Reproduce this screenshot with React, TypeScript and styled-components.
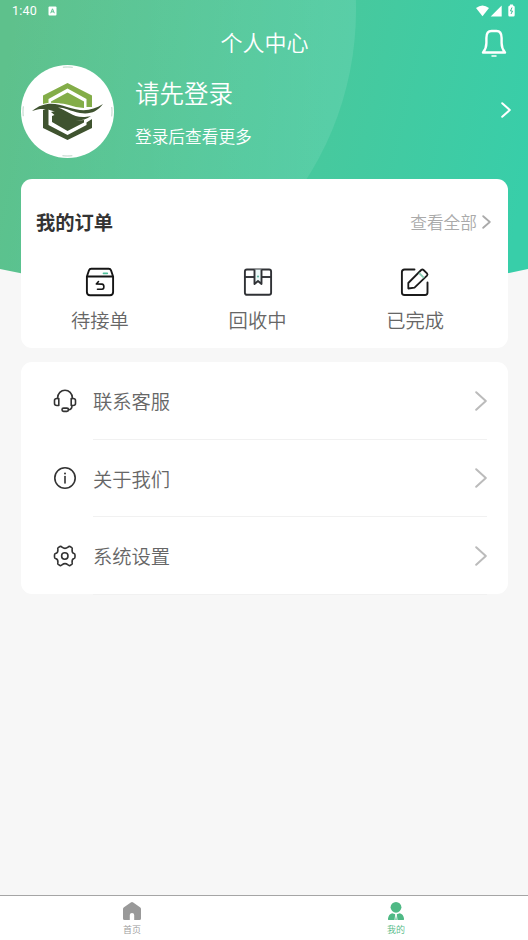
import React from 'react';
import styled, { createGlobalStyle } from 'styled-components';

const Global = createGlobalStyle`
  * { box-sizing: border-box; }
  body {
    margin: 0;
    background: #f7f7f7;
    font-family: Roboto, 'Noto Sans CJK SC', sans-serif;
    font-weight: 350;
  }
`;

const Screen = styled.div`
  position: relative;
  display: flex;
  flex-direction: column;
  width: 528px;
  height: 940px;
  overflow: hidden;
  background: #f7f7f7;
`;

const Backdrop = styled.svg`
  position: absolute;
  top: 0;
  left: 0;
`;

const Header = styled.header`
  position: relative;
  height: 179px;
  color: #fff;
`;

const StatusBar = styled.div`
  display: flex;
  align-items: center;
  height: 22px;
  padding: 0 12px;
  font-size: 12.5px;
  font-weight: 400;
  line-height: 22px;
  letter-spacing: 0.2px;

  svg { display: block; }
`;

const StatusTime = styled.span`
  width: 36px;
`;

const StatusIcons = styled.div`
  display: flex;
  align-items: center;
  margin-left: auto;
  margin-top: -1px;
`;

const TitleBar = styled.div`
  display: grid;
  grid-template-columns: 60px 1fr 60px;
  align-items: center;
  height: 43px;

  svg { justify-self: center; margin: 0 9px 2px 0; }
`;

const Title = styled.h1`
  grid-column: 2;
  margin: 1px 0 0 1px;
  font-size: 22px;
  line-height: 32px;
  font-weight: 350;
  text-align: center;
`;

const Profile = styled.div`
  display: flex;
  align-items: center;
  height: 93px;
  padding: 0 17px 0 21px;

  > svg { margin-bottom: 3px; }
`;

const Avatar = styled.div`
  width: 93px;
  height: 93px;
  border-radius: 50%;
  background: #fff;
  overflow: hidden;
`;

const ProfileText = styled.div`
  flex: 1;
  margin-left: 21px;
`;

const LoginTitle = styled.div`
  margin-top: 5px;
  font-size: 24.5px;
  line-height: 36px;
`;

const LoginHint = styled.div`
  margin-top: 12px;
  font-size: 16.7px;
  line-height: 26px;
`;

const Card = styled.section<{ $height: number }>`
  position: relative;
  flex: none;
  height: ${(p) => p.$height}px;
  margin: 0 20px 14px 21px;
  border-radius: 11px;
  background: #fff;
`;

const CardHead = styled.div`
  display: flex;
  align-items: center;
  justify-content: space-between;
  height: 84px;
  padding: 5px 17px 0 15px;
`;

const CardTitle = styled.h2`
  margin: 0;
  font-size: 19.3px;
  line-height: 28px;
  font-weight: 700;
  color: #333;
`;

const ViewAll = styled.div`
  display: flex;
  align-items: center;
  gap: 5px;
  font-size: 16.7px;
  line-height: 26px;
  color: #aaa;

  svg { margin-bottom: 3px; }
`;

const Orders = styled.div`
  display: grid;
  grid-template-columns: repeat(3, 157.7px);
`;

const Order = styled.div`
  display: flex;
  flex-direction: column;
  align-items: center;
  padding-top: 4px;
  font-size: 19.3px;
  line-height: 28px;
  color: #666;

  svg { display: block; margin-bottom: 11px; }
`;

const MenuRow = styled.div`
  display: flex;
  align-items: center;
  height: 77.5px;
  padding: 0 21px 0 32px;
`;

const MenuBody = styled.div`
  display: flex;
  align-items: center;
  justify-content: space-between;
  flex: 1;
  height: 77.5px;
  margin-left: 16px;
  border-bottom: 1px solid #f1f1f1;
  font-size: 19.3px;
  line-height: 28px;
  color: #666;

  svg { margin-top: 1px; }
`;

const MenuLabel = styled.span`
  padding-top: 6px;
`;

const TabBar = styled.nav`
  display: grid;
  grid-template-columns: 1fr 1fr;
  height: 45px;
  margin-top: auto;
  border-top: 1px solid #a5a5a5;
  background: #fff;
`;

const Tab = styled.div<{ $active?: boolean }>`
  display: flex;
  flex-direction: column;
  align-items: center;
  padding-top: 5px;
  font-size: 9px;
  line-height: 13px;
  color: ${(p) => (p.$active ? '#4fb985' : '#999')};

  svg { display: block; margin-bottom: 3px; }
`;

const Chevron = ({ w, h, color, stroke }: { w: number; h: number; color: string; stroke: number }) => (
  <svg width={w} height={h} fill="none" stroke={color} strokeWidth={stroke} strokeLinecap="round" strokeLinejoin="round">
    <path d={`M1.2 1.2L${w - 1.2} ${h / 2}L1.2 ${h - 1.2}`} />
  </svg>
);

const HeaderBackdrop = () => (
  <Backdrop width="528" height="290" viewBox="0 0 528 290">
    <defs>
      <linearGradient id="green" gradientUnits="userSpaceOnUse" x1="0" y1="90" x2="520" y2="210">
        <stop offset="0" stopColor="#5ec18c" />
        <stop offset="1" stopColor="#38cea9" />
      </linearGradient>
      <linearGradient id="glow" gradientUnits="userSpaceOnUse" x1="0" y1="0" x2="356" y2="0">
        <stop offset="0" stopColor="#fff" stopOpacity="0" />
        <stop offset="1" stopColor="#fff" stopOpacity="0.1" />
      </linearGradient>
      <clipPath id="hero"><path d="M0 0H528V269Q264 326 0 269Z" /></clipPath>
    </defs>
    <g clipPath="url(#hero)">
      <rect width="528" height="290" fill="url(#green)" />
      <circle cx="42" cy="10" r="314" fill="url(#glow)" />
    </g>
  </Backdrop>
);

const Logo = () => (
  <svg width="93" height="93" viewBox="0 0 93 93">
    <circle cx="46.5" cy="46.5" r="44.5" fill="none" stroke="#8fb9a3" strokeWidth=".6" strokeDasharray="10 59.9" strokeDashoffset="5" />
    <path d="M22 40V30.5L46.500 18L71 30.500V42H65.500V34L46.500 23.500L27.500 34V39Z" fill="#83ad48" />
    <path d="M30 39V36.500L46.500 27.500L63 36.500V43Q56 43 48 40Q39 37 30 39Z" fill="#83ad48" />
    <path d="M22 45L27.500 43V60L46.500 70L65.500 60V57.500L71 54V63L46.500 75L22 63Z" fill="#3f532f" />
    <path d="M30 47L35 46C42 49 48 57 63 55V57.500L46.500 66L31 57V51L33.500 50Z" fill="#3f532f" />
    <path d="M11 46C23 36 35 38 46 42C61 47 71 46 82 39C76 47 69 49 59 47.500C49 46 42 42 33 43" fill="none" stroke="#fff" strokeWidth="2" />
    <path d="M11 46C23 36 35 38 46 42C61 47 71 46 82 39C76 47 69 49.500 59 48C49 46 44 42.500 37 42.500C48 46 53 55 70 51C62 57 50 57 42 51.500C32 44 22 42 11 46Z" fill="#3f532f" />
  </svg>
);

const BellIcon = () => (
  <svg width="26" height="28" viewBox="0 0 26 28" fill="none" stroke="#fff" strokeWidth="2.4" strokeLinecap="round" strokeLinejoin="round">
    <path d="M2 23.500C4.500 20.500 5.400 18 5.400 14V9C5.400 4 7.500 2 10.500 2H15.500C18.500 2 20.600 4 20.600 9V14C20.600 18 21.500 20.500 24 23.500Z" />
    <path d="M11 26.900H15" strokeWidth="1.500" />
  </svg>
);

const ReturnBoxIcon = () => (
  <svg width="30" height="30" viewBox="0 0 30 30" fill="none" stroke="#151515" strokeWidth="1.900" strokeLinecap="round" strokeLinejoin="round">
    <path d="M1.900 9.500L4 3.300Q4.600 1.700 6.200 1.700H23.800Q25.400 1.700 26 3.300L28.100 9.500V25Q28.100 28.200 25 28.200H5Q1.900 28.200 1.900 25ZM1.900 9.500H28.100" />
    <path d="M13.500 14.500L11.300 17L17 17.100C19.500 17.300 19.500 22 17 22.200H12.500" strokeWidth="1.600" />
    <path d="M18.500 6.300H22.300" stroke="#4fc09a" strokeWidth="1.700" />
  </svg>
);

const BookmarkBoxIcon = () => (
  <svg width="30" height="30" viewBox="0 0 30 30" fill="none" stroke="#303236" strokeWidth="1.900" strokeLinejoin="round">
    <rect x="1.900" y="2.500" width="26.200" height="25.300" rx="2" />
    <path d="M1.900 10H28.100" />
    <path d="M11.500 2.500V17L15 14L18.500 17V2.500Z" fill="#eefafa" stroke="none" />
    <path d="M11.500 2.500V17L15 14L18.500 17V2.500" />
    <circle cx="15" cy="9.500" r="1.100" fill="#62b8a5" stroke="none" />
  </svg>
);

const EditIcon = () => (
  <svg width="30" height="30" viewBox="0 0 30 30" fill="none" stroke="#1b1b1b" strokeWidth="1.900" strokeLinecap="round" strokeLinejoin="round">
    <path d="M14.500 2.500H4.500Q1.900 2.500 1.900 5V25.500Q1.900 28 4.500 28H25Q27.500 28 27.500 25.500V15.500" />
    <path d="M21.200 3Q22.400 1.900 23.500 3L27 6.400Q28 7.500 27 8.600L14.500 20.700L8.300 21.500V16Z" strokeWidth="1.800" />
    <path d="M19.600 6.500L23.500 10.300" stroke="#8bcdb4" strokeWidth="1.800" />
  </svg>
);

const HeadsetIcon = () => (
  <svg width="24" height="24" viewBox="0 0 24 24" fill="none" stroke="#333" strokeWidth="1.600" strokeLinecap="round" strokeLinejoin="round">
    <path d="M4.500 9.500C4.500 -1.500 19.500 -1.500 19.500 9.500" />
    <path d="M5.800 9.500V16.500H4Q1.500 16.500 1.500 14.500V11.500Q1.500 9.500 4 9.500ZM18.200 9.500V16.500H20Q22.500 16.500 22.500 14.500V11.500Q22.500 9.500 20 9.500Z" />
    <path d="M19 16.500Q19 20.700 15.500 20.700" />
    <rect x="9" y="19.100" width="6.500" height="3.300" rx="1.600" />
  </svg>
);

const InfoIcon = () => (
  <svg width="24" height="24" viewBox="0 0 24 24" fill="none" stroke="#333" strokeWidth="1.600" strokeLinecap="round">
    <circle cx="12" cy="12" r="10.200" />
    <path d="M12 10.500V17" />
    <circle cx="12" cy="7.500" r="1" fill="#333" stroke="none" />
  </svg>
);

const GearIcon = () => (
  <svg width="24" height="24" viewBox="0 0 24 24" fill="none" stroke="#333" strokeWidth="1.600" strokeLinejoin="round">
    <path d="M7 2.500Q8 2 9 3.200Q12 5.600 15 3.200Q16 2 17 2.500L18.800 3.600Q19.600 4.200 19.100 5.500Q18.800 8.900 21 9.500Q22 9.800 22 11V13Q22 14.200 21 14.500Q18.800 15.100 19.100 18.500Q19.600 19.800 18.800 20.400L17 21.500Q16 22 15 20.800Q12 18.400 9 20.800Q8 22 7 21.500L5.200 20.400Q4.400 19.800 4.900 18.500Q5.200 15.100 2.500 14.500Q1.500 14.200 1.500 13V11Q1.500 9.800 2.500 9.500Q5.200 8.900 4.900 5.500Q4.400 4.200 5.200 3.600Z" />
    <circle cx="11.800" cy="12" r="3.200" />
  </svg>
);

const HomeIcon = () => (
  <svg width="20" height="20" viewBox="0 0 20 20" fill="#999">
    <path d="M8.800 1.500Q10 .6 11.200 1.500L18 6.200Q19 7 19 8V17.500Q19 19 17.500 19H12.200V14Q12.200 12 10 12Q7.800 12 7.800 14V19H2.500Q1 19 1 17.500V8Q1 7 2 6.200Z" />
  </svg>
);

const UserIcon = () => (
  <svg width="18" height="20" viewBox="0 0 18 20" fill="#4fb985">
    <circle cx="9" cy="6.300" r="5.400" />
    <path d="M5.200 12.200L8.200 13.200L7.500 19H1.500Q.8 19 1 17.500Q1.500 13.300 5.200 12.200ZM12.800 12.200L9.800 13.200L10.500 19H16.500Q17.200 19 17 17.500Q16.500 13.300 12.800 12.200Z" />
    <path d="M9 14L9.700 19H8.300Z" />
  </svg>
);

const orders = [
  { label: '待接单', Icon: ReturnBoxIcon },
  { label: '回收中', Icon: BookmarkBoxIcon },
  { label: '已完成', Icon: EditIcon },
];

const menu = [
  { label: '联系客服', Icon: HeadsetIcon },
  { label: '关于我们', Icon: InfoIcon },
  { label: '系统设置', Icon: GearIcon },
];

export default function App() {
  return (
    <Screen>
      <Global />
      <HeaderBackdrop />
      <Header>
        <StatusBar>
          <StatusTime>1:40</StatusTime>
          <svg width="9" height="10" viewBox="0 0 9 10">
            <rect x=".5" y=".5" width="8" height="9" rx="1" fill="#fff" />
            <path d="M2.700 7.200L4.500 2.800L6.300 7.200M3.400 5.800H5.600" fill="none" stroke="#5fc293" />
          </svg>
          <StatusIcons>
            <svg width="40" height="14" viewBox="0 0 40 14" fill="#fff">
              <path d="M0 4Q6.500 -1 13 4L6.500 12.200Z" />
              <path d="M25.700 1.500V12.500H14.700Z" />
              <path d="M34 1.500V.6H37V1.500Q38.700 1.500 38.700 3V11Q38.700 12.500 37.500 12.500H33.500Q32.300 12.500 32.300 11V3Q32.300 1.500 34 1.500Z" />
              <path d="M36 3.500L34.500 7H36.500L35 10" fill="none" stroke="#3bbd98" />
            </svg>
          </StatusIcons>
        </StatusBar>
        <TitleBar>
          <Title>个人中心</Title>
          <BellIcon />
        </TitleBar>
        <Profile>
          <Avatar><Logo /></Avatar>
          <ProfileText>
            <LoginTitle>请先登录</LoginTitle>
            <LoginHint>登录后查看更多</LoginHint>
          </ProfileText>
          <Chevron w={10} h={16} color="#fff" stroke={2} />
        </Profile>
      </Header>
      <Card $height={169}>
        <CardHead>
          <CardTitle>我的订单</CardTitle>
          <ViewAll>
            查看全部
            <Chevron w={9} h={14} color="#aaa" stroke={1.8} />
          </ViewAll>
        </CardHead>
        <Orders>
          {orders.map(({ label, Icon }) => (
            <Order key={label}><Icon />{label}</Order>
          ))}
        </Orders>
      </Card>
      <Card $height={232}>
        {menu.map(({ label, Icon }) => (
          <MenuRow key={label}>
            <Icon />
            <MenuBody>
              <MenuLabel>{label}</MenuLabel>
              <Chevron w={12} h={20} color="#bbb" stroke={2} />
            </MenuBody>
          </MenuRow>
        ))}
      </Card>
      <TabBar>
        <Tab><HomeIcon />首页</Tab>
        <Tab $active><UserIcon />我的</Tab>
      </TabBar>
    </Screen>
  );
}
